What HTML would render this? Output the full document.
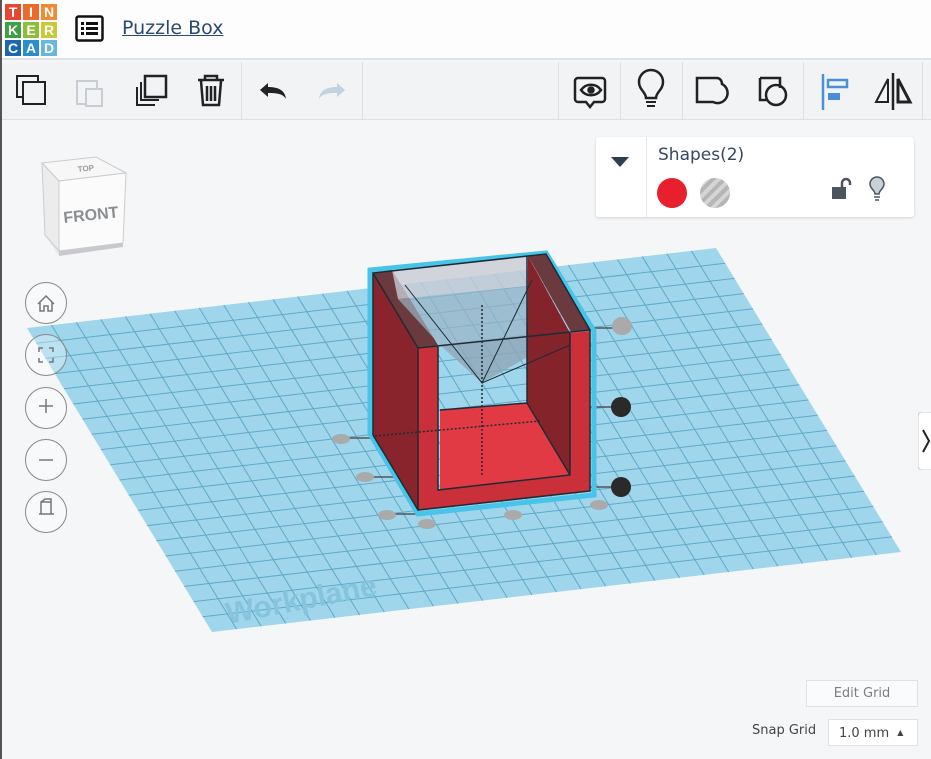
<!DOCTYPE html>
<html><head><meta charset="utf-8"><style>
*{margin:0;padding:0;box-sizing:border-box}
body{width:931px;height:759px;overflow:hidden;background:#f5f6f8;font-family:"Liberation Sans",sans-serif;position:relative}
.hdr{position:absolute;left:0;top:0;width:931px;height:60px;background:#fdfdfe;border-bottom:2px solid #dfe3e8}
.logo{position:absolute;left:4px;top:3px;width:54px;height:54px;display:grid;grid-template-columns:repeat(3,18px);grid-template-rows:repeat(3,18px)}
.logo div{color:#fff;font-weight:bold;font-size:14px;display:flex;align-items:center;justify-content:center;border:1px solid #fff}
.title{position:absolute;left:122px;top:17px;color:#2b4a6f;text-decoration:underline;font-family:"DejaVu Sans",sans-serif;font-size:19px}
.tb{position:absolute;left:0;top:62px;width:931px;height:58px;background:#f1f3f5;border-bottom:1px solid #dde1e5}
.sep{position:absolute;top:62px;width:1px;height:58px;background:#dde1e5}
.panel{position:absolute;left:596px;top:137px;width:318px;height:80px;background:#fff;border-radius:3px;box-shadow:0 1px 3px rgba(0,0,0,.15)}
.btn{position:absolute;left:25px;width:42px;height:42px;border:1px solid #888;border-radius:50%;background:rgba(255,255,255,.3)}
.eg{position:absolute;left:806px;top:680px;width:112px;height:27px;border:1px solid #dfe1e4;background:#fafbfc;color:#7a7f85;text-align:center;line-height:25px;font-family:"DejaVu Sans",sans-serif;font-size:13px}
</style></head><body>
<div style="position:absolute;left:0;top:0;width:2px;height:759px;background:#555;z-index:5"></div>
<div class="hdr">
<div class="logo">
<div style="background:#e8462e">T</div><div style="background:#ee6a2c">I</div><div style="background:#f08a33">N</div>
<div style="background:#3f9f45">K</div><div style="background:#8ebd3c">E</div><div style="background:#c5c93a">R</div>
<div style="background:#1b68b1">C</div><div style="background:#2a8dcd">A</div><div style="background:#6ab5dc">D</div>
</div>
<svg style="position:absolute;left:75px;top:15px" width="29" height="27" viewBox="0 0 29 27"><rect x="1.5" y="1.5" width="26" height="24" rx="2" fill="none" stroke="#111" stroke-width="2.5"/><g fill="#111"><rect x="6" y="7" width="3" height="3"/><rect x="11" y="7" width="12" height="3"/><rect x="6" y="12" width="3" height="3"/><rect x="11" y="12" width="12" height="3"/><rect x="6" y="17" width="3" height="3"/><rect x="11" y="17" width="12" height="3"/></g></svg>
<div class="title">Puzzle Box</div>
</div>
<div class="tb"></div>
<div class="sep" style="left:241px"></div><div class="sep" style="left:362px"></div>
<div class="sep" style="left:558px"></div><div class="sep" style="left:620px"></div><div class="sep" style="left:682px"></div><div class="sep" style="left:803px"></div><div class="sep" style="left:922px"></div>
<svg style="position:absolute;left:0;top:62px" width="931" height="58">
<g fill="none" stroke="#222" stroke-width="2">
<rect x="17" y="14" width="21" height="21"/><rect x="23" y="20" width="22" height="22" fill="#f1f3f5"/>
<g stroke="#c7cdd3"><rect x="77" y="19" width="20" height="23"/><rect x="86" y="27" width="16" height="17" fill="#f1f3f5"/></g>
<rect x="145" y="14" width="21" height="21" stroke-width="2.5"/><path d="M141 20v18h18M137 25v18h18"/>
<path d="M198 18h26M205 18v-4h12v4M201 19l2 24h16l2-24M207 24v15M211 24v15M215 24v15" stroke-width="2.5"/>
</g>
<path d="M260 28l8-7v4c10 0 17 3 18 12c-3-5-8-6-18-6v4z" fill="#222"/>
<path d="M345 28l-8-7v4c-10 0-17 3-18 12c3-5 8-6 18-6v4z" fill="#c4d2de"/>
<g fill="none" stroke="#222" stroke-width="2.5">
<path d="M578 16h24a3 3 0 0 1 3 3v18a3 3 0 0 1-3 3h-8l-4 5l-4-5h-8a3 3 0 0 1-3-3v-18a3 3 0 0 1 3-3z"/>
<path d="M581 28c5-7 15-7 20 0c-5 7-15 7-20 0z"/><circle cx="591" cy="28" r="2.5" fill="#222"/>
<path d="M646 36c0-6-7-8-7-16a12 12 0 0 1 24 0c0 8-7 10-7 16z"/><path d="M646 40h10M647 44h8" stroke-width="2"/>
<path d="M697 16h20c3 0 5 3 5 6a10 10 0 0 1-9 18h-16z"/>
<path d="M760 16h20v10M760 16v22h8"/><circle cx="776" cy="33" r="10"/>
</g>
<path d="M823 12v36" stroke="#4a90d9" stroke-width="2.5"/><rect x="828" y="18" width="19" height="7" fill="none" stroke="#4a90d9" stroke-width="2.5"/><rect x="828" y="31" width="12" height="7" fill="#4a90d9"/>
<path d="M893 11v37" stroke="#222" stroke-width="2.5"/><path d="M888 17v23h-12z" fill="none" stroke="#222" stroke-width="2"/><path d="M898 17v23h12z" fill="none" stroke="#222" stroke-width="3"/>
</svg>
<svg style="position:absolute;left:0;top:0" width="931" height="759">
<g transform="matrix(689,-80,185,304,27,328)">
<path d="M0 0H1V1H0z" fill="#9fd6ec"/>
<path d="M.0357 0V1M.0714 0V1M.1071 0V1M.1429 0V1M.1786 0V1M.2143 0V1M.25 0V1M.2857 0V1M.3214 0V1M.3571 0V1M.3929 0V1M.4286 0V1M.4643 0V1M.5 0V1M.5357 0V1M.5714 0V1M.6071 0V1M.6429 0V1M.6786 0V1M.7143 0V1M.75 0V1M.7857 0V1M.8214 0V1M.8571 0V1M.8929 0V1M.9286 0V1M.9643 0V1M0 .05H1M0 .1H1M0 .15H1M0 .2H1M0 .25H1M0 .3H1M0 .35H1M0 .4H1M0 .45H1M0 .5H1M0 .55H1M0 .6H1M0 .65H1M0 .7H1M0 .75H1M0 .8H1M0 .85H1M0 .9H1M0 .95H1" stroke="#5fa9c8" stroke-width="1" vector-effect="non-scaling-stroke" fill="none"/>
</g>
<text x="228" y="624" transform="rotate(-11 228 624)" font-family="Liberation Sans" font-weight="bold" font-size="30" fill="#86c3dc">Workplane</text>
<g stroke="#555" stroke-width="1.5"><path d="M590 328h30M590 407h30M590 487h30M340 438h35M365 477h40M388 514h30"/></g>
<g fill="#aaa"><ellipse cx="622" cy="326" rx="10" ry="9"/><ellipse cx="341" cy="439" rx="9" ry="5"/><ellipse cx="365" cy="477" rx="9" ry="5"/><ellipse cx="387" cy="515" rx="9" ry="5"/><ellipse cx="427" cy="524" rx="9" ry="5"/><ellipse cx="513" cy="515" rx="9" ry="5"/><ellipse cx="599" cy="505" rx="9" ry="5"/></g>
<circle cx="621" cy="407" r="10" fill="#2a2a2a"/><circle cx="621" cy="487" r="10" fill="#2a2a2a"/>
<path d="M370 270l176-17l48 78v164l-176 19l-48-80z" fill="none" stroke="#47c4e8" stroke-width="5"/>
<path d="M373 273l19-3l46 75l-20 3z" fill="#6b3a3e"/>
<path d="M528 256l18-2l44 76l-19 2z" fill="#6b3a3e"/>
<path d="M392 270l136-14l0 30l-130 13z" fill="#c9ccd4" opacity=".8"/>
<path d="M398 299l130-13l42 47l-130 12z" fill="#9bb4c4" opacity=".7"/>
<path d="M440 345l130-12l-88 50z" fill="#8ea6b6" opacity=".8"/>
<path d="M528 256l42 77v142l-43-72z" fill="#85232b"/>
<path d="M373 273l45 75v162l-45-75z" fill="#8a242c"/>
<path d="M440 410l87-7l43 72l-130 15z" fill="#e23a45"/>
<path d="M418 348l20-2v144l132-15v-142l20-2v160l-172 19z" fill="#c9303a"/>
<g fill="none" stroke="#1d2b35" stroke-width="1.5">
<path d="M373 273l173-19l44 76l-172 18zM373 273v162l45 75M418 348v162l172-19v-161M438 346v144l132-15v-142M440 410l87-7l43 72M527 256v147"/>
<path d="M405 285L482 383L570 345M482 383L532 280" stroke-width="1"/>
<path d="M482 305v170M375 436l165-15" stroke-dasharray="2 2"/>
</g>
</svg>
<svg style="position:absolute;left:38px;top:155px" width="95" height="105">
<path d="M4 8l54-6l30 16l-4 70l-64 12l-13-20z" fill="#e9eaec"/>
<path d="M4 8l54-6l30 16l-67 8z" fill="#f7f7f7" stroke="#ccc"/>
<path d="M21 26l67-8l-3 70l-64 8z" fill="#fbfbfb" stroke="#ccc"/>
<path d="M4 8l17 18v70l-14-16z" fill="#ececec" stroke="#ccc"/>
<text x="26" y="68" font-family="Liberation Sans" font-weight="bold" font-size="16" fill="#8a8d92" transform="rotate(-6 26 68)">FRONT</text>
<text x="40" y="17" font-family="Liberation Sans" font-weight="bold" font-size="8" fill="#999" transform="rotate(-6 40 17)">TOP</text>
<path d="M21 96l64-8v4l-64 9z" fill="#c8c9cc"/>
</svg>
<div class="btn" style="top:282px"></div><div class="btn" style="top:334px"></div><div class="btn" style="top:387px"></div><div class="btn" style="top:439px"></div><div class="btn" style="top:491px"></div>
<svg style="position:absolute;left:25px;top:282px" width="42" height="252" fill="none" stroke="#777" stroke-width="1.5">
<path d="M13 22l8-8l8 8M15 20v9h4v-5h4v5h4v-9"/>
<path d="M14 70v-4h4M24 66h4v4M28 76v4h-4M18 80h-4v-4"/>
<path d="M21 117v14M14 124h14"/>
<path d="M14 178h14"/>
<path d="M14 232h15M16 232v-12l4-3h6v15M16 220h10"/>
</svg>
<div class="panel">
<div style="position:absolute;left:50px;top:0;width:1px;height:80px;background:#e5e7ea"></div>
<svg style="position:absolute;left:15px;top:20px" width="18" height="12"><path d="M0 0h18l-9 10z" fill="#2c3e50"/></svg>
<div style="position:absolute;left:62px;top:8px;font-family:'DejaVu Sans',sans-serif;font-size:17px;color:#34495e">Shapes(2)</div>
<div style="position:absolute;left:61px;top:41px;width:30px;height:30px;border-radius:50%;background:#e8202e"></div>
<div style="position:absolute;left:104px;top:41px;width:30px;height:30px;border-radius:50%;background:repeating-linear-gradient(135deg,#b5b5b5 0 4px,#d5d5d5 4px 8px)"></div>
<svg style="position:absolute;left:232px;top:38px" width="60" height="28"><path d="M4 12h14v12h-14z" fill="#4a5560"/><path d="M14 12v-4a4 4 0 0 1 8 0v2" fill="none" stroke="#4a5560" stroke-width="2.5"/>
<path d="M47 19c0-4-5-5-5-10a7 7 0 0 1 14 0c0 5-5 6-5 10z" fill="#c9d0d6" stroke="#4a5560" stroke-width="1.5"/><path d="M46 22h6M47 25h4" stroke="#4a5560" stroke-width="1.5"/></svg>
</div>
<svg style="position:absolute;left:918px;top:412px" width="13" height="58"><rect x="0" y="0" width="16" height="58" rx="4" fill="#fff" stroke="#ccc"/><path d="M5 18l6 11l-6 11" fill="none" stroke="#222" stroke-width="2"/></svg>
<div class="eg">Edit Grid</div>
<div style="position:absolute;left:752px;top:723px;font-family:'DejaVu Sans',sans-serif;font-size:13px;color:#444">Snap Grid</div>
<div style="position:absolute;left:828px;top:719px;width:90px;height:27px;border:1px solid #dfe1e4;background:#fff;font-family:'DejaVu Sans',sans-serif;font-size:13px;color:#444;line-height:27px;padding-left:10px">1.0 mm <span style="font-size:8px;position:relative;top:-2px;left:4px">▲</span></div>
</body></html>
